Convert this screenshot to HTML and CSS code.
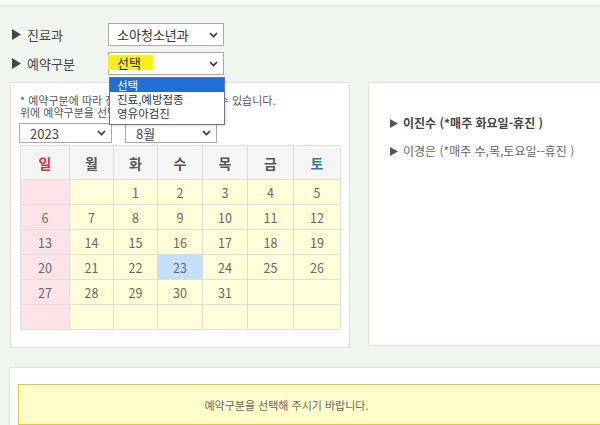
FILE: index.html
```html
<!DOCTYPE html>
<html lang="ko">
<head>
<meta charset="utf-8">
<link rel="stylesheet" href="styles.css">
</head>
<body>
<div class="topbar"></div>
<div class="form">
  <div class="row">
    <div class="label"><svg class="tri" width="9" height="11" viewBox="0 0 9 11"><path d="M0 0L9 5.5L0 11Z"/></svg>진료과</div>
    <div class="select sel-main"><span class="val">소아청소년과</span><svg class="chev" width="9" height="6" viewBox="0 0 9 6"><path d="M1 1L4.5 4.5L8 1"/></svg></div>
  </div>
  <div class="row">
    <div class="label"><svg class="tri" width="9" height="11" viewBox="0 0 9 11"><path d="M0 0L9 5.5L0 11Z"/></svg>예약구분</div>
    <div class="select sel-main"><span class="val mark">선택</span><svg class="chev" width="9" height="6" viewBox="0 0 9 6"><path d="M1 1L4.5 4.5L8 1"/></svg></div>
  </div>
</div>

<div class="panels">
  <div class="panel left">
    <p class="note">* 예약구분에 따라 진료 가능한 요일이 다를 수 있습니다.<br>위에 예약구분을 선택해 주세요.</p>
    <div class="ym">
      <div class="select sel-year"><span class="val">2023</span><svg class="chev" width="9" height="6" viewBox="0 0 9 6"><path d="M1 1L4.5 4.5L8 1"/></svg></div>
      <div class="select sel-month"><span class="val">8월</span><svg class="chev" width="9" height="6" viewBox="0 0 9 6"><path d="M1 1L4.5 4.5L8 1"/></svg></div>
    </div>
    <table class="cal">
      <colgroup><col class="c1"><col class="c2"><col class="c3"><col class="c4"><col class="c5"><col class="c6"><col class="c7"></colgroup>
      <thead>
        <tr><th class="sun">일</th><th>월</th><th>화</th><th>수</th><th>목</th><th>금</th><th class="sat">토</th></tr>
      </thead>
      <tbody>
        <tr><td class="sun"></td><td></td><td>1</td><td>2</td><td>3</td><td>4</td><td>5</td></tr>
        <tr><td class="sun">6</td><td>7</td><td>8</td><td>9</td><td>10</td><td>11</td><td>12</td></tr>
        <tr><td class="sun">13</td><td>14</td><td>15</td><td>16</td><td>17</td><td>18</td><td>19</td></tr>
        <tr><td class="sun">20</td><td>21</td><td>22</td><td class="today">23</td><td>24</td><td>25</td><td>26</td></tr>
        <tr><td class="sun">27</td><td>28</td><td>29</td><td>30</td><td>31</td><td></td><td></td></tr>
        <tr><td class="sun"></td><td></td><td></td><td></td><td></td><td></td><td></td></tr>
      </tbody>
    </table>
  </div>
  <div class="panel right">
    <p class="doc bold"><svg class="tri2" width="8" height="9" viewBox="0 0 8 9"><path d="M0 0L8 4.5L0 9Z"/></svg>이진수 (*매주 화요일-휴진 )</p>
    <p class="doc"><svg class="tri2" width="8" height="9" viewBox="0 0 8 9"><path d="M0 0L8 4.5L0 9Z"/></svg>이경은 (*매주 수,목,토요일--휴진 )</p>
  </div>
</div>

<div class="bottom">
  <div class="notice">예약구분을 선택해 주시기 바랍니다.</div>
</div>

<ul class="dropdown">
  <li class="on">선택</li>
  <li>진료,예방접종</li>
  <li>영유아검진</li>
</ul>
</body>
</html>
```

FILE: styles.css
```css
* { box-sizing: border-box; }
html, body { margin: 0; padding: 0; }
body {
  position: relative;
  width: 600px;
  height: 425px;
  overflow: hidden;
  background: #f1f5ef;
  font-family: "Noto Sans CJK KR", "Noto Sans", sans-serif;
  color: #444;
}
.topbar {
  height: 6px;
  background: #fafcf8;
  border-bottom: 1px solid #dfe9db;
}
.form {
  padding: 17px 0 0 12px;
  display: flex;
  flex-direction: column;
  gap: 6px;
}
.row {
  display: flex;
  align-items: center;
  height: 23px;
}
.label {
  width: 96px;
  display: flex;
  align-items: center;
  font-size: 13px;
  color: #444;
  line-height: 1;
}
.tri { fill: #444; margin-right: 6px; }
.select {
  position: relative;
  display: flex;
  align-items: center;
  background: #fff;
  border: 1px solid #aaa;
  color: #333;
  line-height: 1;
}
.select .val { padding-left: 8px; }
.chev {
  position: absolute;
  right: 5px;
  top: 50%;
  margin-top: -3px;
  fill: none;
  stroke: #333;
  stroke-width: 1.6;
}
.sel-main { width: 116px; height: 23px; font-size: 13px; }
.val.mark {
  margin-left: -1px;
  padding: 1px 12px 1px 9px;
  background: #f7f01c;
  margin-top: -2px;
}
.panels {
  display: flex;
  gap: 18px;
  padding-left: 10px;
  margin-top: 7px;
  margin-right: -20px;
}
.panel {
  background: #fff;
  border: 1px solid #dde3da;
}
.panel.left {
  width: 340px;
  height: 266px;
  padding: 11px 9px 0 8px;
}
.panel.right {
  flex: 1;
  height: 264px;
  padding: 32px 0 0 21px;
}
.note {
  margin: 0 0 0 1px;
  font-size: 11px;
  line-height: 12px;
  color: #555;
  white-space: nowrap;
}
.ym {
  display: flex;
  gap: 13px;
  margin-top: 5px;
}
.sel-year { width: 93px; height: 20px; font-size: 13px; }
.sel-month { width: 92px; height: 20px; font-size: 13px; }
.sel-year .val, .sel-month .val { padding-left: 10px; color: #444; }
.cal {
  margin: 2px 0 0 1px;
  border-collapse: collapse;
  table-layout: fixed;
  width: 320px;
}
.c1 { width: 49px; }
.c2, .c3 { width: 44px; }
.c4, .c5 { width: 45px; }
.c6 { width: 46px; }
.c7 { width: 47px; }
.cal th, .cal td {
  border: 1px solid #dedfd8;
  text-align: center;
  padding: 0;
}
.cal th {
  height: 34px;
  background: #f5f5f5;
  font-size: 14px;
  font-weight: bold;
  color: #555;
}
.cal th.sun { color: #e0303a; }
.cal th.sat { color: #2b7ba3; }
.cal td {
  height: 25px;
  background: #fefed9;
  font-size: 12.5px;
  color: #666;
}
.cal td.sun { background: #fde3e8; }
.cal td.today { background: #c4e0fd; }
.doc {
  margin: 0 0 12px;
  font-size: 12px;
  line-height: 16px;
  color: #666;
  display: flex;
  align-items: center;
  white-space: nowrap;
}
.doc.bold { font-weight: bold; color: #444; }
.tri2 { fill: #555; margin-right: 5px; }
.bottom {
  margin: 19px -30px 0 9px;
  background: #fff;
  border-top: 1px solid #dde3da;
  border-left: 1px solid #dde3da;
  height: 80px;
  padding: 16px 0 0 8px;
}
.notice {
  height: 41px;
  background: #fffdc9;
  border: 1px solid #e6c53a;
  border-right: none;
  display: flex;
  align-items: center;
  justify-content: center;
  padding-right: 76px;
  font-size: 11px;
  color: #666;
}
.dropdown {
  position: absolute;
  left: 109px;
  top: 77px;
  width: 116px;
  margin: 0;
  padding: 0 0 4px;
  list-style: none;
  background: #fff;
  border: 1px solid #777;
  box-shadow: 1px 1px 2px rgba(0,0,0,0.15);
}
.dropdown li {
  height: 14px;
  line-height: 14px;
  padding-left: 7px;
  font-size: 11.5px;
  color: #333;
}
.dropdown li.on {
  background: #1f6fd6;
  color: #fff;
}
```
